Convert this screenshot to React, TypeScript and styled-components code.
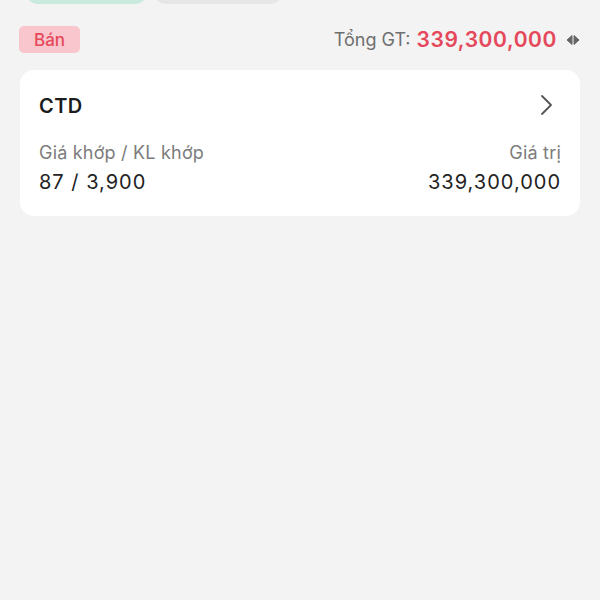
import styled, { createGlobalStyle } from "styled-components";

const GlobalStyle = createGlobalStyle`
  html, body {
    margin: 0;
    padding: 0;
    background: #f3f3f3;
  }
  body {
    font-family: Inter, "Noto Sans", "Liberation Sans", sans-serif;
    color: #1f1f1f;
  }
`;

const Page = styled.div`
  width: 600px;
  height: 600px;
  background: #f3f3f3;
  box-sizing: border-box;
  padding: 0 20px;
  overflow: hidden;
`;

const TabRow = styled.div`
  display: flex;
  gap: 9px;
  margin-top: -26px;
  padding-left: 7px;
`;

const Tab = styled.div<{ $active?: boolean }>`
  width: ${({ $active }) => ($active ? "119px" : "126px")};
  height: 30px;
  border-radius: 10px;
  background: ${({ $active }) => ($active ? "#c9eadd" : "#e6e6e6")};
`;

const SummaryRow = styled.div`
  display: flex;
  justify-content: space-between;
  align-items: center;
  margin-top: 22px;
`;

const SideBadge = styled.span`
  display: inline-flex;
  align-items: center;
  height: 27px;
  padding: 0 15px;
  margin-left: -1px;
  border-radius: 5px;
  background: #f8c6cc;
  color: #e5485a;
  font-size: 17px;
  font-weight: 500;
`;

const Total = styled.div`
  display: flex;
  align-items: center;
  gap: 6px;
  font-size: 18px;
  color: #6f6f6f;
`;

const TotalValue = styled.span`
  color: #e5485a;
  font-size: 21px;
  font-weight: 600;
  letter-spacing: 0.6px;
`;

const Toggle = styled.svg`
  margin-left: 3px;
`;

const Card = styled.div`
  margin-top: 17px;
  background: #ffffff;
  border-radius: 14px;
  padding: 24px 19px 22px 19px;
`;

const CardHead = styled.div`
  display: flex;
  justify-content: space-between;
  align-items: center;
`;

const Chevron = styled.svg`
  margin-top: -3px;
  margin-right: 8px;
`;

const Symbol = styled.span`
  font-size: 20px;
  font-weight: 600;
  color: #1c1c1c;
  letter-spacing: 0.4px;
`;

const Stats = styled.div`
  display: flex;
  justify-content: space-between;
  margin-top: 24px;
`;

const Stat = styled.div<{ $right?: boolean }>`
  display: flex;
  flex-direction: column;
  align-items: ${({ $right }) => ($right ? "flex-end" : "flex-start")};
  gap: 7px;
`;

const Label = styled.span`
  font-size: 18px;
  color: #7c7c7c;
  letter-spacing: 0.2px;
`;

const Value = styled.span`
  font-size: 20px;
  color: #232323;
  letter-spacing: 1px;
`;

export default function App() {
  return (
    <>
      <GlobalStyle />
      <Page>
        <TabRow>
          <Tab $active />
          <Tab />
        </TabRow>
        <SummaryRow>
          <SideBadge>Bán</SideBadge>
          <Total>
            Tổng GT:
            <TotalValue>339,300,000</TotalValue>
            <Toggle width="14" height="12" viewBox="0 0 14 12">
              <path d="M6 1.5 L1 6 L6 10.5 Z" fill="#666" stroke="#666" strokeWidth="1" strokeLinejoin="round" />
              <path d="M8 1.5 L13 6 L8 10.5 Z" fill="#666" stroke="#666" strokeWidth="1" strokeLinejoin="round" />
            </Toggle>
          </Total>
        </SummaryRow>
        <Card>
          <CardHead>
            <Symbol>CTD</Symbol>
            <Chevron width="13" height="22" viewBox="0 0 13 22">
              <path d="M2 2 L11 11 L2 20" fill="none" stroke="#555" strokeWidth="1.8" strokeLinecap="round" strokeLinejoin="round" />
            </Chevron>
          </CardHead>
          <Stats>
            <Stat>
              <Label>Giá khớp / KL khớp</Label>
              <Value>87 / 3,900</Value>
            </Stat>
            <Stat $right>
              <Label>Giá trị</Label>
              <Value>339,300,000</Value>
            </Stat>
          </Stats>
        </Card>
      </Page>
    </>
  );
}
